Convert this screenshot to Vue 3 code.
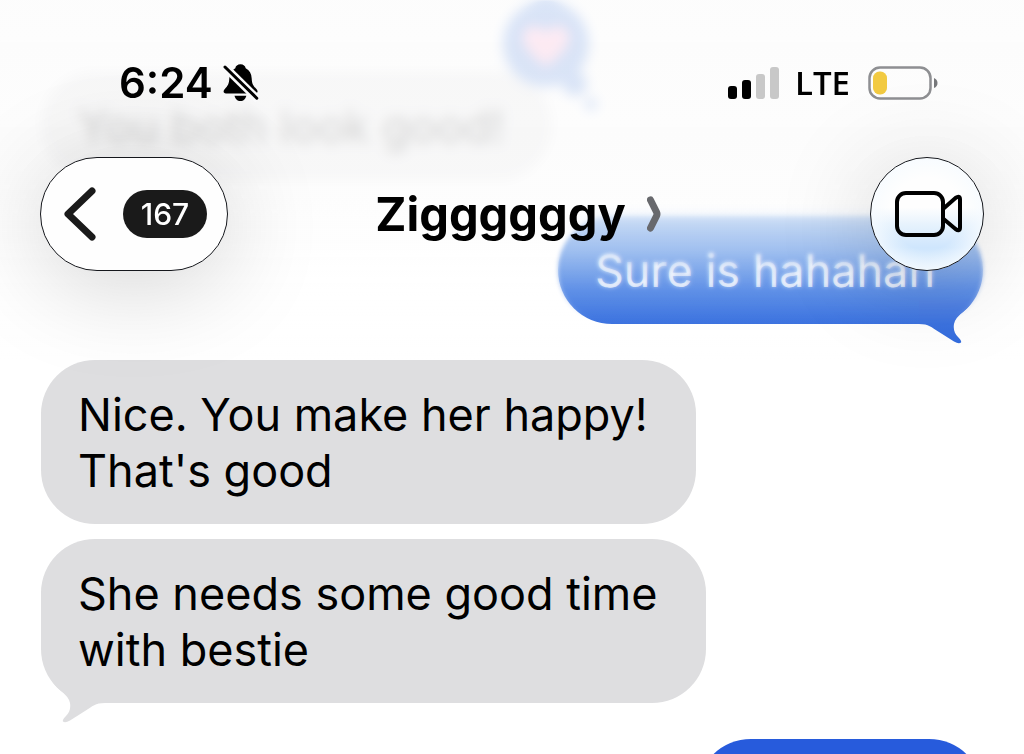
<script setup>
import { ref } from 'vue'

const time = '6:24'
const network = 'LTE'
const unread = 167
const contact = 'Ziggggggy'

const messages = ref([
  { id: 1, from: 'them', lines: ['You both look good!'], loved: true },
  { id: 2, from: 'me', lines: ['Sure is hahahah'], tail: true, older: true },
  { id: 3, from: 'them', lines: ['Nice. You make her happy!', "That's good"] },
  { id: 4, from: 'them', lines: ['She needs some good time', 'with bestie'], tail: true, grouped: true },
  { id: 5, from: 'me', lines: [] },
])

const signal = [
  { height: 13, on: true },
  { height: 19, on: true },
  { height: 25, on: false },
  { height: 32, on: false },
]
</script>

<template>
  <div class="screen">
    <main class="thread">
      <div
        v-for="m in messages"
        :key="m.id"
        class="bubble"
        :class="[m.from, { older: m.older, grouped: m.grouped, blank: !m.lines.length }]"
      >
        <p class="text"><span v-for="line in m.lines" :key="line" class="line">{{ line }}</span></p>
        <svg v-if="m.tail" class="tail" viewBox="0 0 64 44" aria-hidden="true">
          <path d="M10 0C12 4 15 8 19 11Q28 18 29 24C30 30 28 34 25 37Q21 41 22 42.500Q24 44.500 29 41.500L44 32C52 27 54 24 64 24V0Z" />
        </svg>
        <svg v-if="m.loved" class="reaction" viewBox="0 0 98 114" role="img" aria-label="Loved">
          <g class="puff">
            <circle cx="44" cy="44" r="43" />
            <circle cx="73" cy="84" r="12" />
            <circle cx="89" cy="104" r="6" />
          </g>
          <path class="heart" d="M44 67C34 58 21 49 21 37C21 25 37 22 44 33C51 22 67 25 67 37C67 49 54 58 44 67Z" />
        </svg>
      </div>
    </main>

    <header class="top">
      <div class="haze deep"></div>
      <div class="haze light"></div>
      <div class="veil"></div>

      <div class="status">
        <span class="time">{{ time }}</span>
        <svg class="bell" viewBox="0 0 36 38" role="img" aria-label="Silent mode">
          <path d="M17.500.3C14.500.3 12.700 2 12.300 4.200C8.500 6 6.500 9.500 6.300 14.500C6 20 5 21.500 1.800 25C-.2 27.300.3 29.400 3 29.400H32C34.800 29.400 35.400 27.300 33.400 25C30 21.500 29 20 28.700 14.500C28.500 9.500 26.500 6 22.700 4.200C22.200 2 20.500.3 17.500.3Z" />
          <path d="M11.500 31.700H23.300C22.700 34.700 20.500 37 17.400 37C14.300 37 12.100 34.700 11.500 31.700Z" />
          <path class="gap" d="M1 2L35 35.500" />
          <path class="slash" d="M2 3L33.800 34.200" />
        </svg>
        <div class="signal" role="img" aria-label="Signal: 2 of 4 bars">
          <i v-for="b in signal" :key="b.height" :class="{ on: b.on }" :style="{ height: b.height + 'px' }"></i>
        </div>
        <span class="network">{{ network }}</span>
        <svg class="battery" viewBox="0 0 70 34" role="img" aria-label="Battery low">
          <rect class="shell" x="1.500" y="1.500" width="61" height="31" rx="10.500" />
          <rect class="charge" x="5" y="5.500" width="14" height="23" rx="6.500" />
          <path class="nub" d="M66 12Q69.500 13.500 69.500 17T66 22Z" />
        </svg>
      </div>

      <nav class="nav">
        <button class="glass back" type="button" aria-label="Back, 167 unread">
          <svg class="chevron" viewBox="0 0 32 54" aria-hidden="true">
            <path d="M28 4L4 27L28 50" />
          </svg>
          <span class="count">{{ unread }}</span>
        </button>
        <button class="contact" type="button">
          <span>{{ contact }}</span>
          <svg class="more" viewBox="0 0 14 36" aria-hidden="true">
            <path d="M3.500 4L9.500 16Q10.500 18 9.500 20L3.500 32" />
          </svg>
        </button>
        <button class="glass video" type="button" aria-label="Video call">
          <svg viewBox="-4 0 72 46" aria-hidden="true">
            <rect x="2" y="2" width="46" height="42" rx="9" />
            <path d="M48 18L60.500 7Q65 4 65 8.500V36.500Q65 41 60.500 38L48 27.500" />
          </svg>
        </button>
      </nav>
    </header>
  </div>
</template>

<style>
body {
  margin: 0;
  background: #fff;
}
</style>

<style scoped>
.screen {
  position: relative;
  height: 100vh;
  overflow: hidden;
  background: #fff;
  color: #000;
  font-family: Inter, "Liberation Sans", sans-serif;
}

.thread {
  display: flex;
  flex-direction: column;
  gap: 36px;
  padding: 72px 41px 0;
}

.bubble {
  position: relative;
  flex: none;
  box-sizing: border-box;
  padding: 27px 48px 25px 37px;
  border-radius: 54px;
}

.bubble.them {
  align-self: flex-start;
  background: #dedee0;
}

.bubble.me {
  align-self: flex-end;
  background: #275bdc;
  color: #fff;
}

.bubble.me.older {
  background: linear-gradient(#2a76dc, #2a6bdf 70%, #2c67dd);
}

.bubble.grouped {
  margin-top: -21px;
}

.bubble.blank {
  min-width: 286px;
}

.text {
  min-height: 56px;
  margin: 0;
  font-size: 45px;
  line-height: 56px;
}

.line {
  display: block;
  white-space: nowrap;
}

.tail {
  position: absolute;
  bottom: -20px;
  left: 0;
  width: 64px;
  height: 44px;
  fill: #dedee0;
}

.me .tail {
  right: 0;
  left: auto;
  fill: #2c67dd;
  transform: scaleX(-1);
}

.reaction {
  position: absolute;
  top: -72px;
  right: -48px;
  width: 98px;
  height: 114px;
}

.puff {
  fill: #2c6cdc;
}

.heart {
  fill: #ff92c4;
}

.top {
  position: absolute;
  inset: 0 0 auto;
  padding-bottom: 90px;
}

.haze,
.veil {
  position: absolute;
  inset: 0;
}

.deep {
  backdrop-filter: blur(6px);
  mask-image: linear-gradient(#000 190px, transparent 240px);
}

.light {
  backdrop-filter: blur(2px);
  mask-image: linear-gradient(#000 250px, transparent 320px);
}

.veil {
  background: linear-gradient(
    rgba(252, 252, 252, 0.83) 0,
    rgba(252, 252, 252, 0.84) 170px,
    rgba(253, 253, 253, 0.74) 220px,
    rgba(254, 254, 254, 0.56) 250px,
    rgba(255, 255, 255, 0.26) 290px,
    rgba(255, 255, 255, 0.08) 324px,
    rgba(255, 255, 255, 0) 360px
  );
}

.status {
  position: relative;
  display: flex;
  align-items: center;
  height: 36px;
  padding: 65px 86px 56px 119px;
}

.time {
  font-size: 42px;
  font-weight: 600;
  line-height: 36px;
}

.bell {
  width: 36px;
  height: 38px;
  margin-left: 10px;
}

.bell .gap {
  fill: none;
  stroke: #fafafb;
  stroke-width: 8;
}

.bell .slash {
  fill: none;
  stroke: #000;
  stroke-width: 3;
  stroke-linecap: round;
}

.signal {
  display: flex;
  align-items: flex-end;
  gap: 5px;
  margin-left: auto;
}

.signal i {
  width: 9px;
  border-radius: 3px;
  background: #c8c8c8;
}

.signal i.on {
  background: #000;
}

.network {
  margin-left: 16px;
  font-family: "Open Sans", "Noto Sans", sans-serif;
  font-size: 33px;
  font-weight: 600;
  line-height: 36px;
}

.battery {
  width: 70px;
  height: 34px;
  margin-left: 18px;
}

.shell {
  fill: none;
  stroke: #8e8f92;
  stroke-width: 2.5;
}

.charge {
  fill: #f2ca42;
}

.nub {
  fill: #77787b;
}

.nav {
  position: relative;
  display: grid;
  grid-template-columns: 1fr auto 1fr;
  align-items: center;
  padding: 0 40px;
}

button {
  padding: 0;
  color: #000;
  font-family: inherit;
}

.glass {
  box-sizing: border-box;
  display: flex;
  align-items: center;
  height: 114px;
  border: 1px solid #15171c;
  border-radius: 57px;
  background: #fefefe;
  box-shadow: 0 12px 100px rgba(0, 0, 0, 0.18);
}

.back {
  justify-self: start;
  gap: 27px;
  padding: 0 20px 0 23px;
}

.chevron {
  width: 32px;
  height: 54px;
  fill: none;
  stroke: #1a1a1a;
  stroke-width: 7;
  stroke-linecap: round;
  stroke-linejoin: round;
}

.count {
  width: 84px;
  border-radius: 24px;
  background: #1a1a1a;
  color: #fff;
  font-size: 30px;
  font-weight: 500;
  line-height: 48px;
}

.contact {
  display: flex;
  align-items: center;
  gap: 21px;
  padding-left: 12px;
  border: 0;
  background: none;
  font-size: 47px;
  font-weight: 700;
  line-height: 56px;
}

.more {
  width: 14px;
  height: 36px;
  fill: none;
  stroke: #68696d;
  stroke-width: 7;
  stroke-linecap: round;
}

.video {
  justify-self: end;
  justify-content: center;
  width: 114px;
  background:
    radial-gradient(circle at center, transparent 36px, rgba(246, 251, 255, 0.8) 57px),
    linear-gradient(#fefefe 44%, #e6f2fd 60%, #cfe6fd 80%, #deeefd);
}

.video svg {
  width: 72px;
  height: 46px;
  fill: none;
  stroke: #000;
  stroke-width: 4;
  stroke-linejoin: round;
}
</style>
